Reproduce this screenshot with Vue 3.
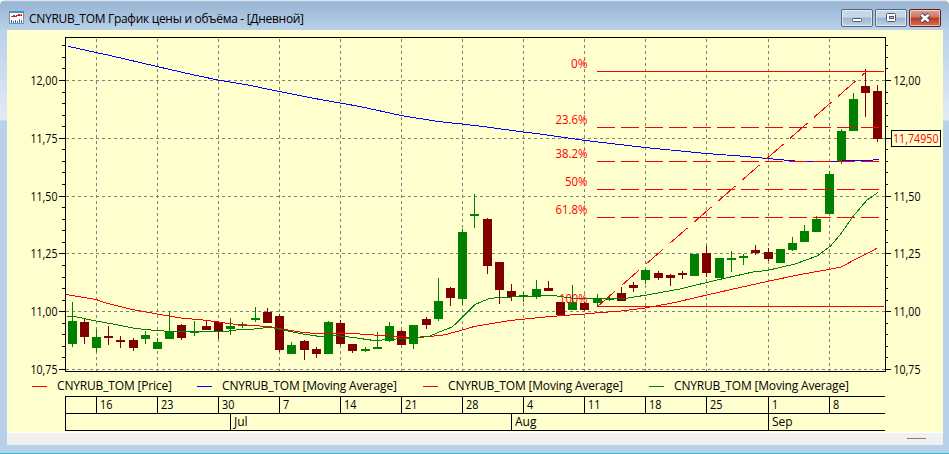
<template>
  <div class="window">
    <header class="titlebar">
      <svg class="app-icon" width="15" height="13" shape-rendering="crispEdges">
        <rect width="15" height="13" fill="#8a8f96" />
        <rect x="1" y="2" width="13" height="10" fill="#fff" />
        <rect width="15" height="2" fill="#3399cc" />
        <path d="M2 5h2v-1h1v1h2v-1h2v-1h1v1h2v-1h1" fill="none" stroke="#d02020" />
        <path
          d="M2.5 12v-3M4.5 12v-2M6.5 12v-3M8.5 12v-2M10.5 12v-4M12.5 12v-3"
          stroke="#2878b8"
        />
      </svg>
      <span class="title">CNYRUB_TOM График цены и объёма - [Дневной]</span>
      <div class="controls">
        <button class="control" aria-label="Minimize">
          <svg width="30" height="16">
            <rect x="10.5" y="8.5" width="9" height="3" rx="1" fill="#fff" stroke="#525966" />
          </svg>
        </button>
        <button class="control" aria-label="Maximize">
          <svg width="30" height="16">
            <rect x="10.5" y="3.5" width="9" height="8" rx="1" fill="#fff" stroke="#525966" />
            <rect x="13.5" y="6.5" width="4" height="2" fill="#b5c9df" stroke="#525966" />
          </svg>
        </button>
        <button class="control close" aria-label="Close">
          <svg width="30" height="16">
            <path d="M11 4.5l8 7M19 4.5l-8 7" stroke="#4a3f4c" stroke-width="4.4" />
            <path d="M11.3 4.7l7.4 6.6M18.7 4.7l-7.4 6.6" stroke="#fff" stroke-width="2.6" />
          </svg>
        </button>
      </div>
    </header>
    <main class="client">
      <svg class="chart" width="936" height="346" viewBox="7 30 936 346">
        <g shape-rendering="crispEdges">
          <g class="grid">
            <line v-for="p in prices" :key="p" x1="66" x2="885" :y1="priceY(p)" :y2="priceY(p)" />
            <line
              v-for="w in weeks"
              :key="w.bar"
              :x1="barX(w.bar) + 0.5"
              :x2="barX(w.bar) + 0.5"
              y1="39"
              y2="371"
            />
          </g>
          <path class="axis" d="M65.5 371.5V37.5H885.5V371.5Z" />
          <path class="axis" :d="ticks" />
          <g v-for="(c, i) in candles" :key="i" :fill="c[4] ? '#008000' : '#800000'">
            <rect :x="barX(i)" :y="c[2]" width="1" :height="c[3] - c[2]" />
            <rect :x="barX(i) - 4" :y="c[0]" width="9" :height="c[1] - c[0]" />
          </g>
          <polyline
            v-for="a in averages"
            :key="a.color"
            :points="a.points"
            fill="none"
            :stroke="a.color"
          />
          <g stroke="#ff0000">
            <line
              v-for="f in fibs"
              :key="f.label"
              x1="597"
              :x2="f.solid ? 884 : 879"
              :y1="f.y + 0.5"
              :y2="f.y + 0.5"
              :stroke-dasharray="f.solid ? 'none' : '18 6'"
            />
            <line x1="597.5" y1="306.5" x2="866.5" y2="71.5" stroke-dasharray="23.9 8" />
          </g>
          <rect class="price-box" x="891.5" y="130.5" width="49" height="16" />
        </g>
        <g v-for="p in prices" :key="p">
          <text x="30.5" :y="labelY(p)" textLength="27" lengthAdjust="spacingAndGlyphs">
            {{ format(p) }}
          </text>
          <text
            v-if="p !== 11.75"
            x="893.5"
            :y="labelY(p)"
            textLength="27"
            lengthAdjust="spacingAndGlyphs"
          >
            {{ format(p) }}
          </text>
        </g>
        <text class="red" x="893" y="143" textLength="45.5" lengthAdjust="spacingAndGlyphs">
          11,74950
        </text>
        <text
          v-for="f in fibs"
          :key="f.label"
          class="red"
          :x="587.5 - f.width"
          :y="f.y - 3"
          :textLength="f.width"
          lengthAdjust="spacingAndGlyphs"
        >
          {{ f.label }}
        </text>
      </svg>
      <ul class="legend">
        <li v-for="(l, i) in legend" :key="i">
          <i :style="{ background: l.color }"></i>
          <span>CNYRUB_TOM [{{ l.name }}]</span>
        </li>
      </ul>
      <svg class="timeline" width="936" height="36" viewBox="7 396 936 36">
        <g class="axis" shape-rendering="crispEdges">
          <path d="M885 396.5H65.5V430.5H885M65 413.5H885" />
          <line
            v-for="w in weeks"
            :key="w.bar"
            :x1="barX(w.bar) + 0.5"
            :x2="barX(w.bar) + 0.5"
            y1="396"
            y2="413"
          />
          <line
            v-for="m in months"
            :key="m.label"
            :x1="barX(m.bar) + 0.5"
            :x2="barX(m.bar) + 0.5"
            y1="413"
            y2="430"
          />
        </g>
        <text
          v-for="w in weeks"
          :key="w.bar"
          :x="barX(w.bar) + 4"
          y="409"
          :textLength="String(w.label).length * 6.2"
          lengthAdjust="spacingAndGlyphs"
        >
          {{ w.label }}
        </text>
        <text v-for="m in months" :key="m.label" :x="barX(m.bar) + 4" y="426">
          {{ m.label }}
        </text>
      </svg>
    </main>
    <footer class="status"><span class="grip"></span></footer>
  </div>
</template>
<script setup>
const prices = [12, 11.75, 11.5, 11.25, 11, 10.75];
const format = (p) => p.toFixed(2).replace(".", ",");
const priceY = (p) => Math.round(80 + (12 - p) * 231.2) + 0.5;
const labelY = (p) => priceY(p) + 4.5;
const barX = (i) => Math.round(95.97 + (i - 2) * 12.21);

const weeks = [16, 23, 30, 7, 14, 21, 28, 4, 11, 18, 25, 1, 8].map((label, i) => ({
  label,
  bar: 2 + i * 5,
}));
const months = [
  { label: "Jul", bar: 13 },
  { label: "Aug", bar: 36 },
  { label: "Sep", bar: 57 },
];

const ticks = [...Array(29)]
  .map((_, i) => {
    const price = 12.15 - i * 0.05;
    const major = i % 5 === 3;
    const y = priceY(price);
    const size = major ? 6 : 3;
    return `M${65 - size} ${y}h${size}M886 ${y}h${size - 1}`;
  })
  .join("");

// body top, body bottom, wick top, wick bottom, rising
const candles = [
  [321, 344, 302, 347, 1],
  [322, 337, 319, 344, 0],
  [337, 348, 329, 352, 1],
  [336, 338, 326, 345, 0],
  [340, 342, 336, 348, 0],
  [340, 348, 338, 351, 0],
  [335, 339, 331, 344, 1],
  [342, 349, 338, 349, 1],
  [331, 339, 311, 339, 1],
  [325, 338, 324, 340, 0],
  [331, 333, 321, 336, 1],
  [326, 330, 321, 330, 0],
  [322, 331, 321, 339, 0],
  [326, 329, 318, 335, 1],
  [324, 326, 322, 328, 1],
  [318, 320, 307, 322, 1],
  [312, 323, 308, 323, 0],
  [316, 350, 314, 352, 0],
  [345, 354, 342, 354, 1],
  [341, 350, 340, 360, 0],
  [349, 354, 347, 358, 0],
  [322, 354, 321, 354, 1],
  [323, 344, 320, 345, 0],
  [344, 351, 344, 353, 0],
  [349, 351, 347, 352, 1],
  [347, 349, 332, 349, 1],
  [326, 341, 322, 342, 1],
  [331, 345, 330, 345, 0],
  [325, 344, 325, 349, 1],
  [319, 325, 317, 329, 0],
  [301, 319, 278, 321, 1],
  [288, 298, 287, 306, 0],
  [232, 299, 229, 305, 1],
  [214, 216, 194, 228, 1],
  [219, 266, 218, 274, 0],
  [262, 290, 262, 304, 0],
  [291, 297, 284, 301, 0],
  [295, 297, 292, 302, 1],
  [289, 297, 280, 299, 1],
  [288, 291, 281, 291, 0],
  [302, 315, 302, 315, 0],
  [302, 310, 285, 310, 1],
  [303, 310, 302, 311, 0],
  [298, 303, 294, 306, 1],
  [298, 300, 296, 301, 1],
  [293, 301, 287, 301, 0],
  [285, 288, 282, 292, 0],
  [270, 280, 269, 284, 1],
  [273, 278, 271, 280, 0],
  [275, 278, 274, 286, 0],
  [273, 275, 271, 279, 0],
  [254, 276, 254, 276, 1],
  [253, 273, 246, 277, 0],
  [258, 278, 258, 278, 1],
  [258, 260, 251, 272, 1],
  [256, 258, 254, 265, 1],
  [250, 253, 245, 255, 0],
  [252, 259, 248, 261, 0],
  [249, 263, 249, 263, 1],
  [243, 250, 237, 251, 1],
  [231, 242, 225, 242, 1],
  [219, 232, 216, 232, 1],
  [174, 214, 171, 214, 1],
  [131, 161, 129, 164, 1],
  [99, 131, 93, 131, 1],
  [86, 93, 69, 117, 0],
  [91, 139, 85, 142, 0],
];

const averages = [
  {
    color: "#0000ff",
    points:
      "68,46.3 96,52.5 110,55.5 157,66.5 194,75 218,80 248,85 279,91.5 320,99.5 360,106.5 401,115.5 438,121.5 462,124 487,127 523,132 540,134 584,140.3 645,147.5 706,153.5 740,156 768,158.5 800,161.5 835,161.5 850,160.5 867,160.5 879,159.5",
  },
  {
    color: "#ff0000",
    points:
      "66,294.5 96,299.5 107,303.3 130,309 157,314 181,318 206,320.3 218,322 240,325 270,326.5 279,328.5 300,332 315,333.5 355,333.5 365,334.5 400,336.5 410,337.5 420,337.3 430,336.5 445,334.8 464,329.5 475,326.3 510,320.5 540,317.5 560,315.7 585,314 598,312.7 619,311.3 645,308 675,302.5 706,295.2 740,287.5 768,281.3 800,274.5 829,269.5 841,267 860,257 877,248.3",
  },
  {
    color: "#008000",
    points:
      "67,316.3 75,316.5 84,318.5 96,321 120,325.3 133,328 145,329.5 170,331.5 225,331.5 240,329.5 250,329.5 260,328.2 272,327.5 285,330.5 306,334.5 320,336.5 334,335.3 353,337.5 374,340.5 390,339.5 413,337.7 430,336 440,331.7 452,327 457,322.5 475,304.5 488,299 497,297.5 533,296.3 553,295.5 560,296.5 575,298.5 620,298.5 628,298 645,295.3 680,289 717,280 753,272 768,270.3 795,264 817,256 830,246.5 840,235 853,216.5 867,200 878,192.5",
  },
];

const fibs = [
  { label: "0%", y: 71, width: 16.5, solid: true },
  { label: "23.6%", y: 127, width: 32 },
  { label: "38.2%", y: 161, width: 32 },
  { label: "50%", y: 189, width: 22.5 },
  { label: "61.8%", y: 217, width: 32 },
  { label: "100%", y: 306, width: 28.5, solid: true },
];

const legend = [
  { name: "Price", color: "#ff0000" },
  { name: "Moving Average", color: "#0000ff" },
  { name: "Moving Average", color: "#ff0000" },
  { name: "Moving Average", color: "#008000" },
];
</script>
<style>
body {
  margin: 0;
}
</style>
<style scoped>
.window {
  box-sizing: border-box;
  width: 949px;
  height: 454px;
  padding: 0 6px 0 7px;
  display: flex;
  flex-direction: column;
  overflow: hidden;
  font-family: "Open Sans", "Noto Sans", sans-serif;
  font-size: 12px;
  color: #000;
  border-bottom: 1px solid #30c0d8;
  border-radius: 5px 5px 0 0;
  background: linear-gradient(
    #e9f1f8 0,
    #98b4d2 2px,
    #b9d1ea 30px,
    #e1ebf6 120px,
    #b9d0e9 121px
  );
}
.titlebar {
  height: 30px;
  flex: none;
  display: flex;
  box-sizing: border-box;
  padding: 9px 2px 0 2px;
}
.app-icon {
  margin: 2px 5px 0 0;
}
.title {
  line-height: 20px;
  white-space: nowrap;
  letter-spacing: -0.3px;
}
.controls {
  display: flex;
  gap: 2px;
  margin-left: auto;
}
.control {
  box-sizing: border-box;
  width: 32px;
  height: 18px;
  padding: 0;
  border: 1px solid #57677c;
  border-radius: 2px;
  box-shadow: inset 0 0 0 1px rgba(255, 255, 255, 0.55);
  background: linear-gradient(#c5d6e8 0 45%, #9db5cf 50%, #bdd2e8);
}
.control svg {
  display: block;
}
.close {
  border-color: #5b2020;
  background: linear-gradient(#e0a091 0, #cf7565 45%, #b8371f 50%, #d4735a);
}
.client {
  height: 402px;
  flex: none;
  background: #ffffce;
}
.client svg {
  display: block;
  overflow: visible;
}
.grid line {
  stroke: #808080;
  stroke-dasharray: 3 3;
}
.axis {
  fill: none;
  stroke: #000;
}
.price-box {
  fill: #ffffce;
  stroke: #000;
}
.red {
  fill: #ff0000;
}
.legend {
  display: flex;
  gap: 26px;
  height: 20px;
  margin: 0;
  padding: 0 0 0 25px;
  list-style: none;
}
.legend li {
  display: flex;
  align-items: center;
  gap: 10px;
}
.legend i {
  width: 15px;
  height: 1px;
}
.legend span {
  width: 175px;
  line-height: 20px;
  white-space: nowrap;
  letter-spacing: -0.17px;
}
.legend li:first-child span {
  width: 114px;
}
.status {
  height: 12px;
  flex: none;
  display: flex;
  justify-content: flex-end;
  border-top: 1px solid #fff;
  background: #f0f0f0;
}
.grip {
  width: 19px;
  height: 1px;
  margin: 5px 17px 0 0;
  background: #808080;
}
</style>
